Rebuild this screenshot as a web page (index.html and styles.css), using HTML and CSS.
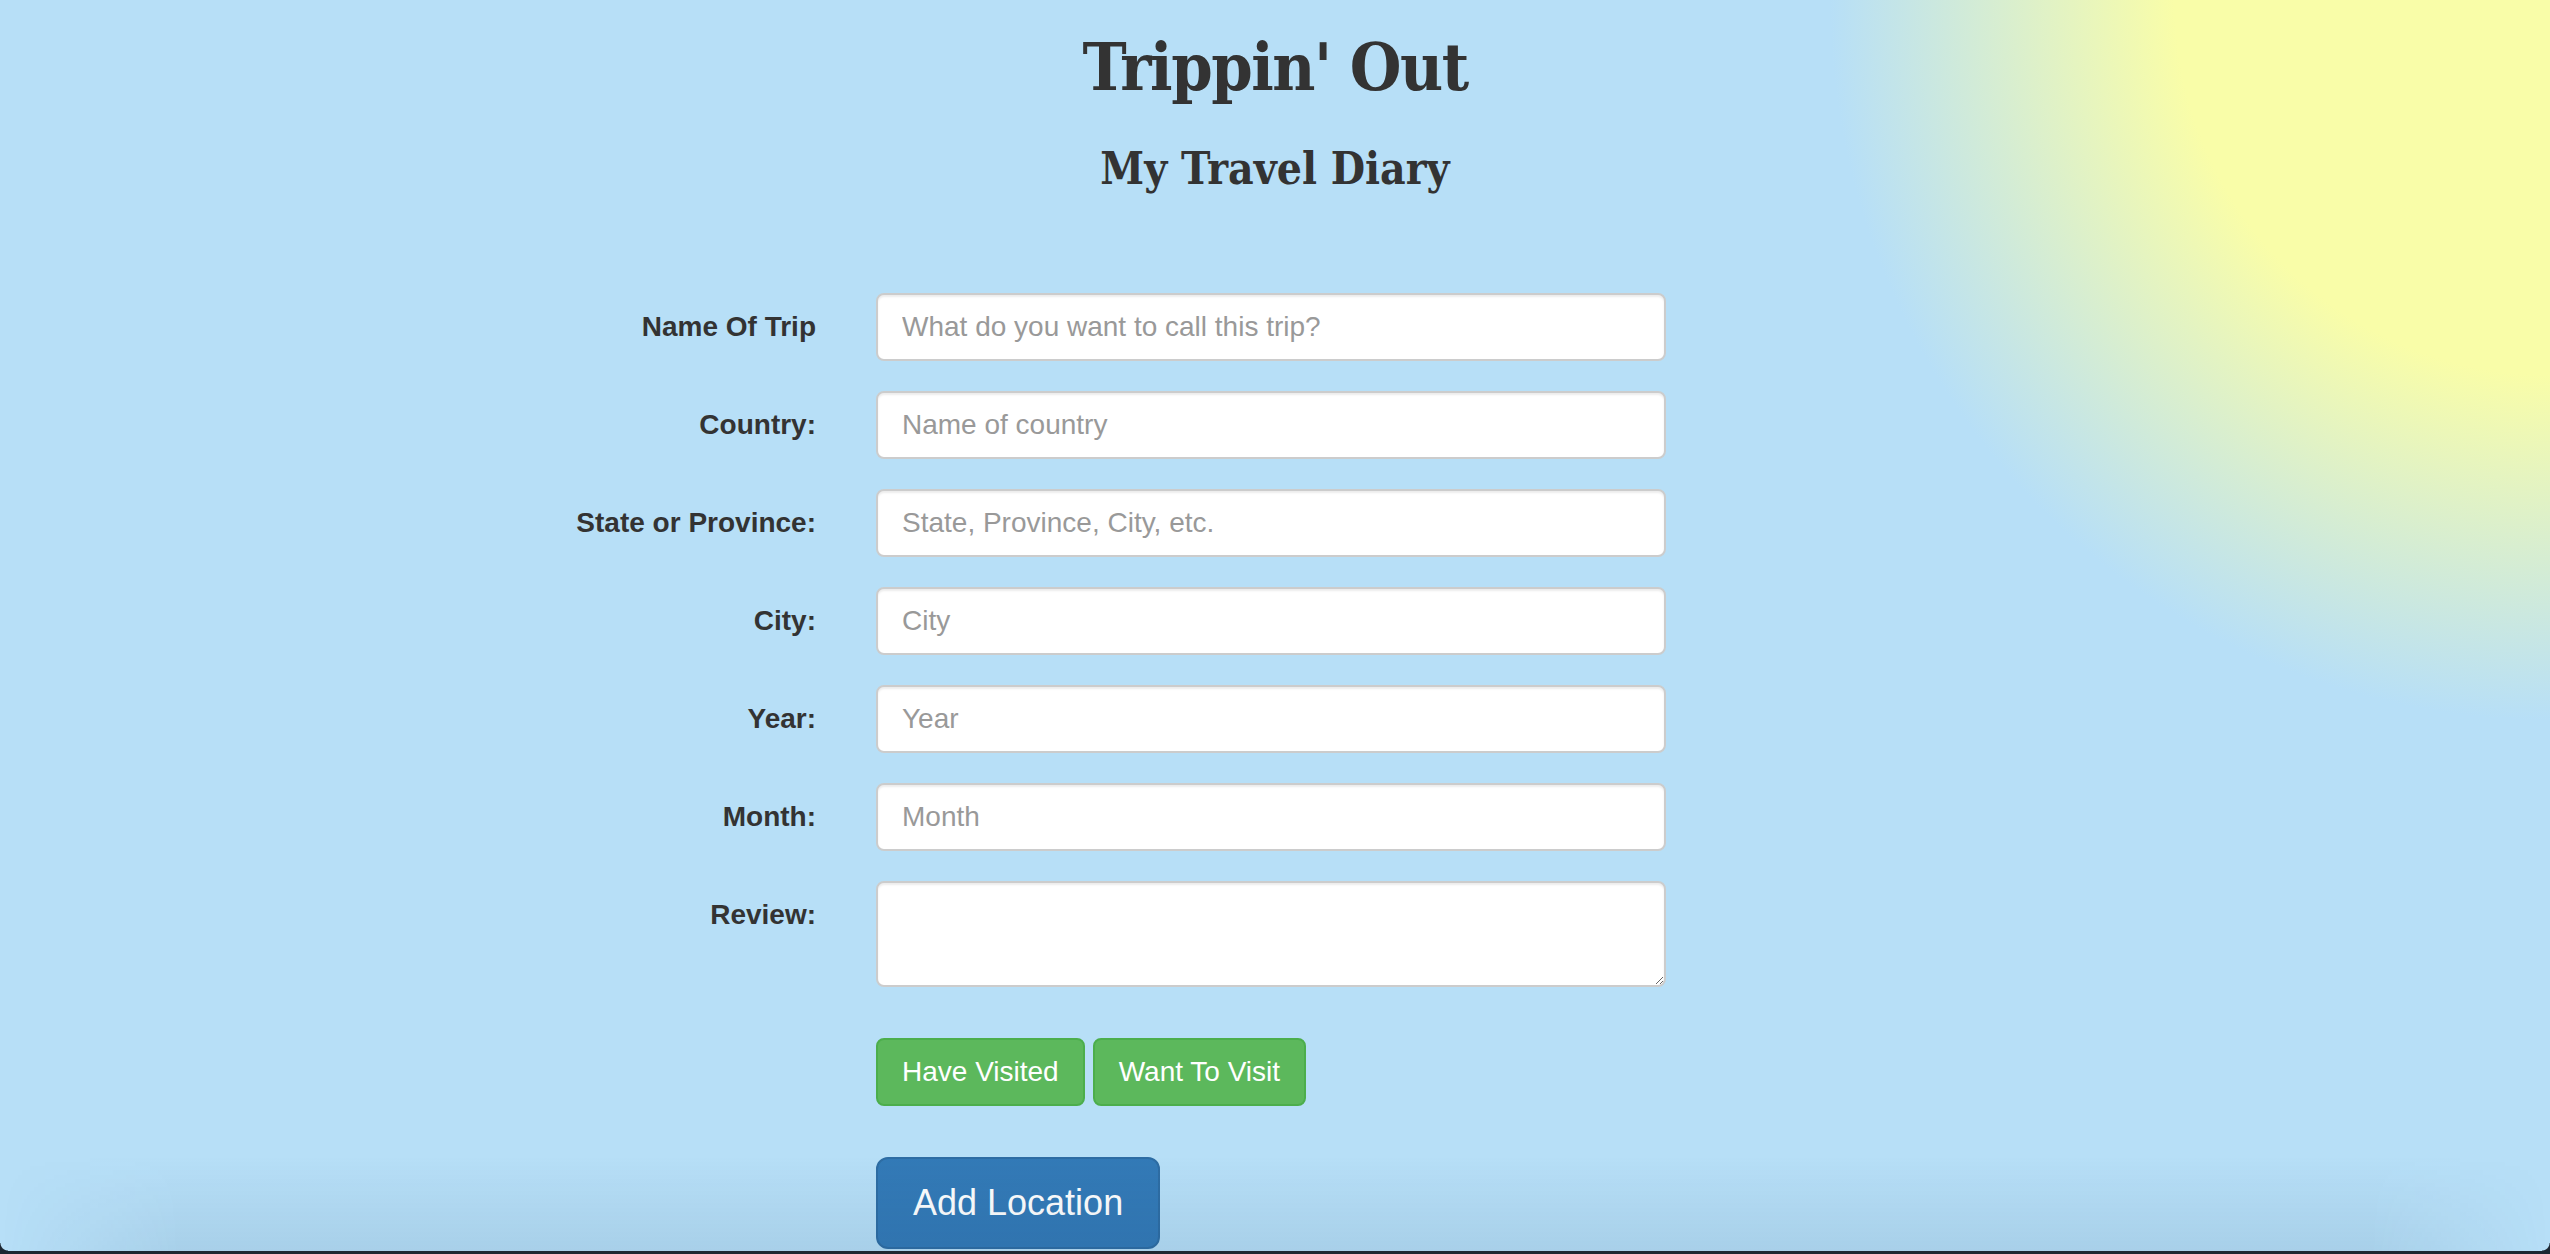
FILE: index.html
```html
<!DOCTYPE html>
<html lang="en">
<head>
<meta charset="utf-8">
<title>Trippin' Out</title>
<link rel="stylesheet" href="styles.css">
</head>
<body>
<div class="page">
  <header class="masthead">
    <h1 class="title">Trippin' Out</h1>
    <h3 class="subtitle">My Travel Diary</h3>
  </header>

  <form class="trip-form">
    <label class="field-label" for="trip-name">Name Of Trip</label>
    <input class="field" id="trip-name" type="text" placeholder="What do you want to call this trip?">

    <label class="field-label" for="country">Country:</label>
    <input class="field" id="country" type="text" placeholder="Name of country">

    <label class="field-label" for="state">State or Province:</label>
    <input class="field" id="state" type="text" placeholder="State, Province, City, etc.">

    <label class="field-label" for="city">City:</label>
    <input class="field" id="city" type="text" placeholder="City">

    <label class="field-label" for="year">Year:</label>
    <input class="field" id="year" type="text" placeholder="Year">

    <label class="field-label" for="month">Month:</label>
    <input class="field" id="month" type="text" placeholder="Month">

    <label class="field-label" for="review">Review:</label>
    <textarea class="field field-area" id="review"></textarea>

    <div class="visit-actions">
      <button type="button" class="btn btn-success">Have Visited</button>
      <button type="button" class="btn btn-success">Want To Visit</button>
    </div>

    <div class="submit-row">
      <button type="button" class="btn btn-primary btn-lg">Add Location</button>
    </div>
  </form>
</div>
<div class="window-shade"></div>
<div class="window-edge"></div>
<div class="window-corner window-corner-left"></div>
<div class="window-corner window-corner-right"></div>
</body>
</html>
```

FILE: styles.css
```css
html {
  height: 100%;
  background-color: #b7dff7;
  background-image: radial-gradient(circle at 100% 0, #f9fda8 0, #f9fda8 375px, #b7dff7 720px);
  background-repeat: no-repeat;
}

body {
  margin: 0;
  height: 100%;
  overflow: hidden;
  color: #333333;
  font-family: "Liberation Sans", Arial, sans-serif;
  font-size: 28px;
}

.masthead {
  text-align: center;
  padding-top: 31px;
}

.title {
  margin: 0;
  font-family: "DejaVu Serif", serif;
  font-stretch: condensed;
  font-weight: bold;
  font-size: 66px;
  line-height: 72px;
  letter-spacing: -1.5px;
  color: #333333;
}

.subtitle {
  margin: 40px 0 0;
  font-family: "DejaVu Serif", serif;
  font-stretch: condensed;
  font-weight: bold;
  font-size: 44px;
  line-height: 52px;
  color: #333333;
}

.trip-form {
  display: grid;
  grid-template-columns: 400px 790px;
  column-gap: 60px;
  row-gap: 30px;
  margin: 98px 0 0 416px;
}

.field-label {
  text-align: right;
  font-weight: bold;
  font-size: 28px;
  line-height: 40px;
  padding-top: 14px;
  color: #333333;
}

.field {
  box-sizing: border-box;
  display: block;
  width: 790px;
  height: 68px;
  margin: 0;
  padding: 12px 24px;
  font-family: "Liberation Sans", Arial, sans-serif;
  font-size: 28px;
  line-height: 40px;
  color: #555555;
  background: #ffffff;
  border: 2px solid #cccccc;
  border-radius: 8px;
  box-shadow: inset 0 2px 2px rgba(0, 0, 0, 0.075);
  outline: none;
}

.field::placeholder {
  color: #999999;
  opacity: 1;
}

.field-area {
  height: 106px;
  resize: vertical;
}

.visit-actions {
  grid-column: 2;
  display: flex;
  gap: 8px;
  margin-top: 21px;
}

.submit-row {
  grid-column: 2;
  margin-top: 21px;
}

.btn {
  box-sizing: border-box;
  display: inline-block;
  margin: 0;
  padding: 12px 24px;
  font-family: "Liberation Sans", Arial, sans-serif;
  font-size: 28px;
  line-height: 40px;
  border: 2px solid transparent;
  border-radius: 8px;
  color: #ffffff;
  cursor: pointer;
  white-space: nowrap;
}

.btn-success {
  background: #5cb85c;
  border-color: #4cae4c;
}

.btn-primary {
  background: #337ab7;
  border-color: #2e6da4;
}

.btn-lg {
  padding: 20px 35px;
  font-size: 36px;
  line-height: 48px;
  border-radius: 12px;
}

/* window chrome overlays from the screenshot */
.window-shade {
  position: fixed;
  left: 0;
  right: 0;
  bottom: 3px;
  height: 95px;
  pointer-events: none;
  background: linear-gradient(to bottom, rgba(20, 60, 100, 0), rgba(20, 60, 100, 0.09));
  -webkit-mask-image: linear-gradient(to right, transparent 0, #000 180px, #000 calc(100% - 180px), transparent 100%);
  mask-image: linear-gradient(to right, transparent 0, #000 180px, #000 calc(100% - 180px), transparent 100%);
}

.window-edge {
  position: fixed;
  left: 0;
  right: 0;
  bottom: 0;
  height: 3px;
  background: #1d2731;
}

.window-corner {
  position: fixed;
  bottom: 3px;
  width: 8px;
  height: 8px;
}

.window-corner-right {
  right: 0;
  background: radial-gradient(circle at 0 0, transparent 7px, #1d2731 8px);
}

.window-corner-left {
  left: 0;
  background: radial-gradient(circle at 100% 0, transparent 7px, #1d2731 8px);
}
```
